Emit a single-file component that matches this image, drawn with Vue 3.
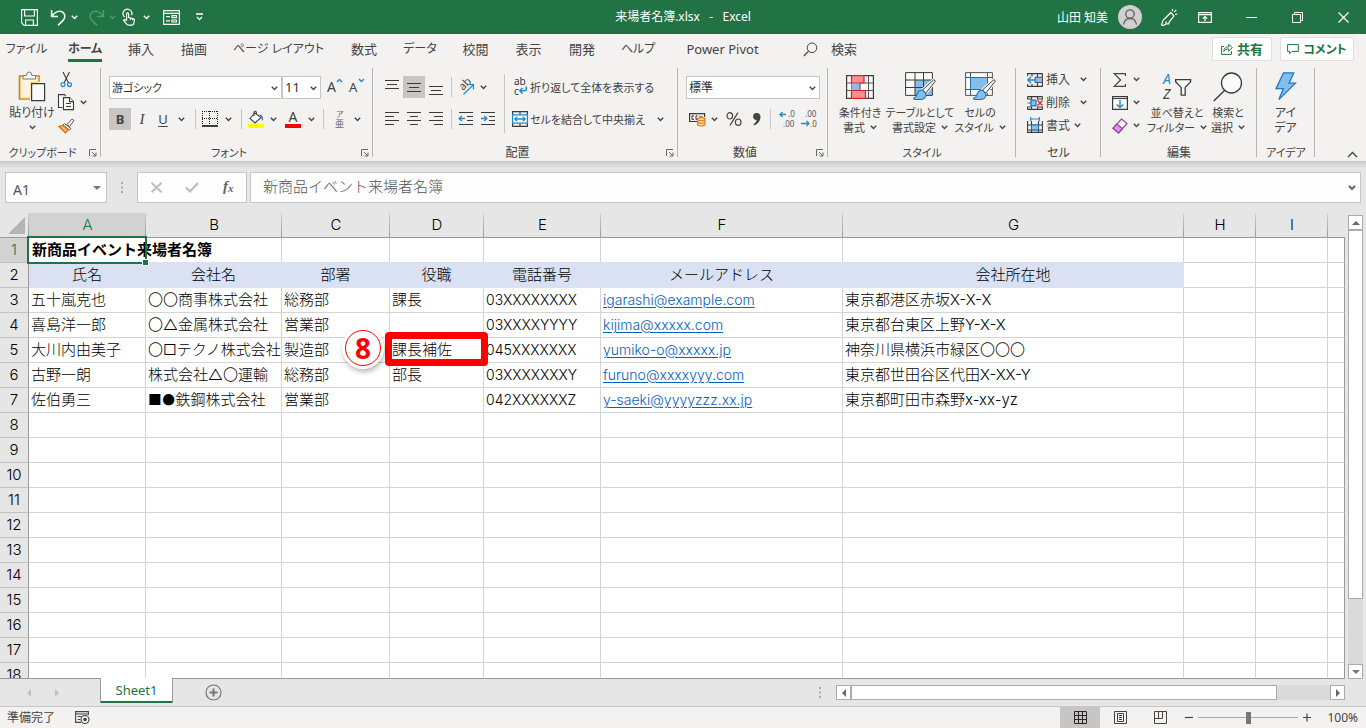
<script setup>
import { h, ref } from 'vue'

const K = '#3b3a39'
const B = '#1e8bcd'

const icons = {
  save: [17, 17, `<g fill="none" stroke="#fff" stroke-width="1.2"><path d="M.6.6h15.800v15.800H3.200L.6 13.800z"/><path d="M3.600.6v6.400h9.800V.6M4.600 16.400v-5.400h7.800v5.400"/></g>`],
  undo: [17, 17, `<path d="M1.600 1v6.400H8M2 7C5 2.600 9.600 1 12.600 3.200c3.400 2.600 2.600 6 .2 8.400L8 16.400" fill="none" stroke="#fff" stroke-width="1.500"/>`],
  redo: [17, 17, `<path d="M15.400 1v6.400H9M15 7C12 2.600 7.400 1 4.400 3.200 1 5.800 1.800 9.200 4.200 11.600L9 16.400" fill="none" stroke="#4f9a70" stroke-width="1.500"/>`],
  touch: [14, 17, `<g fill="none" stroke="#fff" stroke-width="1.200"><path d="M2.600 8A4.400 4.400 0 1 1 9.600 6.200"/><path d="M4.600 11.600V4.500q1-1.400 2 0V8.500l4.600 1q1.300.4 1.200 1.800l-.6 3.200q-.4 1.700-2 1.700H6.600q-1.200 0-2-1.200L1.600 11.400q.8-1.600 3 .2M8.600 9v2M10.600 9.400v1.800"/></g>`],
  form: [17, 15, `<g fill="none" stroke="#fff" stroke-width="1.200"><path d="M.6.6h15.800v13.800H.6zM.6 3.400h15.800M3 6.600h4M3 10.900h4M9 5.600h4.400v2H9zM9 10h4.400v2H9z"/></g>`],
  custom: [9, 8, `<path d="M1 1h7M2 4l2.500 2.600L7 4" fill="none" stroke="#fff" stroke-width="1.300"/>`],
  avatar: [24, 24, `<circle cx="12" cy="12" r="12" fill="#d2d0ce"/><g fill="none" stroke="#605e5c" stroke-width="1.300"><circle cx="12" cy="9" r="4.200"/><path d="M5.500 19.500q1-6 6.500-6t6.500 6"/></g>`],
  pen: [18, 18, `<g fill="none" stroke="#fff" stroke-width="1.200"><path d="M11 4.500 3.200 12l-1.700 4.800 1.700.7 3.300-1.700h2.200l.6-2L14 8z"/><path d="M5.500 15.500l1-2M12.500 3.200V1M14.200 4.200l2-2.400M15 6.500l2.200-.3"/></g>`],
  ribbon: [14, 11, `<path d="M.6.6h12.800v9.800H.6zM.6 2.600h12.800M7 9V4.600M4.800 6.600 7 4.500l2.200 2.100" fill="none" stroke="#fff" stroke-width="1.200"/>`],
  min: [11, 11, `<path d="M0 5.500h11" stroke="#fff"/>`],
  restore: [11, 11, `<path d="M.5 2.500h8v8h-8zM2.500 2.500v-2h8v8h-2" fill="none" stroke="#fff"/>`],
  close: [11, 11, `<path d="M.5.5l10 10M10.500.5l-10 10" stroke="#fff" stroke-width="1.200"/>`],
  search: [15, 15, `<circle cx="9" cy="5.800" r="4.800" fill="none" stroke="#444"/><path d="M5.600 9.200.8 14" stroke="#444" stroke-width="1.200"/>`],
  share: [12, 12, `<path d="M3 3.500H.6v7.900h9.800V8M2.800 8.500c0-3 1.700-4.700 4.900-4.700V1.200l3.600 3.600-3.600 3.400V5.900c-2.200 0-3.700.7-4.900 2.600z" fill="none" stroke="#217346"/>`],
  comment: [12, 11, `<path d="M.6.6h10.800v6.800H5L2.600 9.800V7.400h-2z" fill="none" stroke="#217346"/>`],
  paste: [28, 31, `<path d="M6 5H1.500v23H12M17 5h4v6" fill="none" stroke="#e07b10" stroke-width="1.600"/><path d="M2.500 6h17.500v5.500h-7V27h-10.500z" fill="#fdf3df" stroke="#f8c97a"/><path d="M5 8V4.500h3.500q0-3.500 2.700-3.500t2.700 3.500h3.600V8z" fill="#fafafa" stroke="#777"/><path d="M13.600 12.600h13v17h-13z" fill="#fafafa" stroke="${K}" stroke-width="1.200"/>`],
  cut: [17, 17, `<path d="M5 1 10.500 12M11.500 1 6 12" stroke="${K}" stroke-width="1.100"/><circle cx="5" cy="13.600" r="2" fill="none" stroke="${B}" stroke-width="1.200"/><circle cx="11.500" cy="13.600" r="2" fill="none" stroke="${B}" stroke-width="1.200"/>`],
  copy: [17, 17, `<g fill="#fafafa" stroke="${K}" stroke-width="1.100"><path d="M4.500 13.500h-4V.6h6l1.500 1.500"/><path d="M5.500 3.600h6l4 4v8h-10z"/><path d="M11.500 3.600v4h4M8 9.500h5M8 12.500h5"/></g>`],
  brush: [17, 16, `<path d="M9 6.500 14 1l2 1.500-4.500 6z" fill="#fafafa" stroke="#555"/><path d="M6.500 5.500l6.500 5-1.500 1.500-6.500-5z" fill="#fff" stroke="#555"/><path d="M5 7.500l5.500 4.200L7.500 15 .8 8.500z" fill="#f5b56a" stroke="#d86f0c" stroke-width="1.200"/>`],
  grow: [16, 20, `<text x="0" y="15" font-size="14" fill="#444">A</text><path d="M10 5l2.500-2.500L15 5" fill="none" stroke="${B}" stroke-width="1.400"/>`],
  shrink: [16, 20, `<text x="0" y="15" font-size="13" fill="#444">A</text><path d="M10 2l2.500 2.500L15 2" fill="none" stroke="${B}" stroke-width="1.400"/>`],
  border: [16, 16, `<path d="M.5 0v13M15.500 0v13M7.500 0v13M0 .5h16M0 7.500h16" stroke="#222" stroke-dasharray="1 1"/><path d="M0 15h16" stroke="#111" stroke-width="1.600"/>`],
  fill: [17, 18, `<path d="M7 3 2 8.500l5 4.500 6-5.500zM6 6V2q1.200-1.600 2.400 0v3" fill="#fff" stroke="#444" stroke-width="1.100"/><path d="M12 4.500q3.500 1 3 6-1.500 0-1.500-2.500 0-1.500-2-2z" fill="#2b78b8"/><path d="M0 14h16v4H0z" fill="#ff0"/>`],
  color: [17, 18, `<text x="3.500" y="12" font-size="14" fill="#444">A</text><path d="M0 14h16v4H0z" fill="#f00"/>`],
  ruby: [12, 20, `<text x="2" y="8" font-size="8" fill="#666">ア</text><text x="1" y="18" font-size="9" fill="#666">亜</text>`],
  top: [14, 11, `<path d="M0 1.500h14M2 5.500h10M0 9.500h14" stroke="${K}"/>`],
  lefta: [14, 14, `<path d="M0 .5h14M0 4.500h9M0 8.500h14M0 12.500h9" stroke="${K}"/>`],
  mida: [14, 14, `<path d="M0 .5h14M3 4.500h8M0 8.500h14M3 12.500h8" stroke="${K}"/>`],
  righta: [14, 14, `<path d="M0 .5h14M5 4.500h9M0 8.500h14M5 12.500h9" stroke="${K}"/>`],
  orient: [17, 17, `<text x="0" y="0" font-size="11" fill="#444" transform="translate(5 12) rotate(-45)">ab</text><path d="M5.500 15.500 15.500 5.500M10.500 5.500h5v5" fill="none" stroke="${B}" stroke-width="1.200"/>`],
  outdent: [15, 14, `<path d="M0 .5h14M8 4.500h6M8 8.500h6M0 12.500h14" stroke="${K}"/><path d="M0 6.500h6M2.800 4 .2 6.500 2.800 9" fill="none" stroke="${B}" stroke-width="1.400"/>`],
  indent: [15, 14, `<path d="M0 .5h14M8 4.500h6M8 8.500h6M0 12.500h14" stroke="${K}"/><path d="M0 6.500h6M3.200 4 5.800 6.500 3.200 9" fill="none" stroke="${B}" stroke-width="1.400"/>`],
  wrap: [16, 20, `<text x="2" y="8" font-size="10" fill="#333">ab</text><text x="2" y="18" font-size="10" fill="#333">c</text><path d="M14 9.500q1.600 4-2 4.300H8M10.500 11 7.800 13.800l2.700 2.700" fill="none" stroke="${B}" stroke-width="1.500"/>`],
  merge: [16, 16, `<path d="M.6.6h14.800v14.800H.6zM8 .6v3M8 12v3.400" fill="none" stroke="${K}" stroke-width="1.200"/><path d="M.6 3.800h14.800v8.400H.6z" fill="#fff" stroke="${B}" stroke-width="1.300"/><path d="M3 8h10M5.200 5.600 2.800 8l2.400 2.400M10.800 5.600 13.200 8l-2.400 2.400" fill="none" stroke="${B}" stroke-width="1.300"/>`],
  money: [17, 15, `<path d="M8 9.500H.6V1.600h15V5" fill="none" stroke="${K}" stroke-width="1.200"/><path d="M5 3.800H3v3.600h2M8.500 3.800H7v3.600h1M11 3.800V5.500M13 3.800V5" fill="none" stroke="${K}"/><path d="M8.600 6.500v6.500q3.700 1.800 7.300 0V6.500q-3.600-1.800-7.300 0z" fill="#fbd9b0" stroke="#e07b10" stroke-width="1.200"/><path d="M8.600 8q3.700 1.500 7.300 0M8.600 10.500q3.700 1.500 7.300 0" fill="none" stroke="#e07b10" stroke-width="1.200"/>`],
  percent: [16, 14, `<g fill="none" stroke="#444" stroke-width="1.200"><ellipse cx="3.800" cy="3.800" rx="2.800" ry="3.200"/><ellipse cx="12.200" cy="10.200" rx="2.800" ry="3.200"/><path d="M12 .6 4 13.400"/></g>`],
  comma: [9, 13, `<path d="M4.500 0a3.600 3.600 0 0 1 4 3.800c0 4-2.800 7.400-6.200 8.600l-.7-1.100q2.900-1.800 3.100-4.300A3.500 3.500 0 0 1 4.500 0z" fill="#444"/>`],
  incdec: [17, 20, `<text x="9" y="8" font-size="8" fill="#555">.0</text><text x="4" y="18" font-size="8" fill="#555">.00</text><path d="M1 5.500h6M3.500 3 1 5.500 3.500 8" fill="none" stroke="${B}" stroke-width="1.300"/>`],
  decdec: [17, 20, `<text x="4" y="8" font-size="8" fill="#555">.00</text><text x="9" y="18" font-size="8" fill="#555">.0</text><path d="M0 14.500h8M5.500 12 8 14.500 5.500 17" fill="none" stroke="${B}" stroke-width="1.300"/>`],
  cond: [28, 24, `<path d="M.6.6h26.800v22.800H.6z" fill="#fafafa" stroke="${K}" stroke-width="1.200"/><path d="M5.500.6v22.800M22.500.6v22.800M.6 8h26.800M.6 15.500h26.800" stroke="#555"/><path d="M5.500.6H18V8H5.500zM5.500 15.500h14v7.900h-14z" fill="#ff8f90" stroke="#e02020" stroke-width="1.200"/><path d="M5.500 8.500H14V15H5.500z" fill="#83beec"/><path d="M14 8v7.500" stroke="#555"/>`],
  tablefmt: [31, 29, `<path d="M.6.600h26.800v22.800H.6z" fill="#fafafa"/><path d="M10 8h17v15H10z" fill="#83beec"/><path d="M.6.6h26.800v22.800H.6zM10 .6v22.800M18.500.6v22.800M.6 8h26.800M.6 15.500h26.800" fill="none" stroke="${K}"/><path d="M28.500 8 17.500 18l3 3.500L30 9.500z" stroke="#f3f2f1" stroke-width="3"/><path d="M28.500 8 17.500 18l3 3.500L30 9.500q.5-2-1.500-1.500z" fill="#f6f6f6" stroke="#444"/><path d="M17.500 18l3.500 3.800q.5 5.700-6.500 5.700H9.500q-1.500-.5-.5-1.500 2.500-.7 3-3.500 1.500-4.500 5.500-4.500z" fill="#83beec" stroke="#1e6fb8" stroke-width="1.100"/>`],
  cellstyle: [31, 29, `<path d="M.6.6h26.800v22.800H.6z" fill="#fafafa"/><path d="M.6.600h26.800v22.800H.6zM5.500.6v22.800M22.500.6v22.800M.6 5.500h26.800M.6 17.500h26.800" fill="none" stroke="#555"/><path d="M5.500 5.500h17v12h-17z" fill="#83beec" stroke="#1e6fb8"/><path d="M28.500 8 17.500 18l3 3.500L30 9.500z" stroke="#f3f2f1" stroke-width="3"/><path d="M28.500 8 17.500 18l3 3.500L30 9.500q.5-2-1.500-1.500z" fill="#f6f6f6" stroke="#444"/><path d="M17.500 18l3.500 3.800q.5 5.700-6.500 5.700H9.500q-1.500-.5-.5-1.500 2.500-.7 3-3.500 1.500-4.500 5.500-4.500z" fill="#83beec" stroke="#1e6fb8" stroke-width="1.100"/>`],
  cins: [16, 14, `<path d="M.6 3V.6h14.800v12.800H.6V11M5 .6v3M10.500.6v12.800M5 11v2.400" fill="none" stroke="${K}" stroke-width="1.100"/><path d="M8 4.200h7.500v5.300H8z" fill="#83beec" stroke="${K}" stroke-width=".8"/><path d="M1 7h7M4 3.800.9 7 4 10.200" fill="none" stroke="${B}" stroke-width="1.500"/>`],
  cdel: [16, 14, `<path d="M.6.6h14.800M.6.6V3h4V.6M10.500.6V3h4.900V.6M.6 13.400h14.800M.6 13.400V11h4v2.400M10.500 13.400V11h4.900v2.400" fill="none" stroke="${K}" stroke-width="1.100"/><path d="M.6 7h3M4 4.200h5v5.600H4z" fill="#83beec" stroke="#1e6fb8" stroke-width="1.200"/><path d="M10.500 4.500l5 5M15.500 4.500l-5 5" stroke="#e0343a" stroke-width="1.600"/>`],
  cfmt: [16, 17, `<path d="M3.600 0v4M12.400 0v4M3.600 2h8.800" stroke="${B}" stroke-width="1.200"/><path d="M.6 4v11.400h14.800V4M.6 8h14.800M.6 13h14.800M4.500 4v11.400M11.500 4v11.400" fill="none" stroke="${K}" stroke-width="1.100"/><path d="M4.500 8h7v5h-7z" fill="#83beec" stroke="#1e6fb8"/>`],
  sigma: [16, 16, `<path d="M13.400 4V1.600H2.200L8.600 8 2.200 14.400h11.200V12" fill="none" stroke="#444" stroke-width="1.200"/>`],
  down: [16, 14, `<path d="M.6.600h14.800v12.800H.6z" fill="#fafafa" stroke="${K}" stroke-width="1.200"/><path d="M.6 2.600h14.800" stroke="${K}"/><path d="M8 4v7.500M4.800 8.400 8 11.600l3.200-3.200" fill="none" stroke="${B}" stroke-width="1.400"/>`],
  eraser: [16, 16, `<path d="M9.500 1 15 5.500 6.500 15 1 10.200z" fill="#fafafa" stroke="#9b3fa8" stroke-width="1.200"/><path d="M4.800 6l5.700 4.700L6.500 15 1 10.200z" fill="#d49adb" stroke="#9b3fa8" stroke-width="1.200"/>`],
  sort: [30, 31, `<text x="1" y="13" font-size="14" fill="${B}">A</text><text x="1" y="28" font-size="14" fill="#444">Z</text><path d="M13.600 8.600h15v2.200l-5.400 5.600v7.800h-4v-7.800l-5.600-5.600z" fill="#fafafa" stroke="${K}" stroke-width="1.300"/>`],
  find: [30, 30, `<circle cx="18.500" cy="11" r="10" fill="#fafafa" stroke="${K}" stroke-width="1.300"/><path d="M11.500 18.500.8 29" stroke="${K}" stroke-width="1.400"/>`],
  idea: [23, 29, `<path d="M9.500.8h10.200l-4.600 10.400h6.300L4.800 27.600l4.600-11H2z" fill="#83beec" stroke="#1e78c8" stroke-width="1.300"/>`],
  launch: [8, 8, `<path d="M7 .5H.5V7M3 3l4 4M7 3.500V7H3.500" fill="none" stroke="#666"/>`],
  collapse: [11, 7, `<path d="M1 6l4.500-4.500L10 6" fill="none" stroke="#444" stroke-width="1.400"/>`],
  cancel: [13, 11, `<path d="M1.500.8l10 9.400M11.500.8l-10 9.400" stroke="#bdbdbd" stroke-width="1.900"/>`],
  enter: [14, 11, `<path d="M1 5.500 5 9.500 13 1" fill="none" stroke="#bdbdbd" stroke-width="2.200"/>`],
  fx: [16, 19, `<text x="3" y="13" font-size="15" font-style="italic" font-weight="700" font-family="Liberation Serif, serif" fill="#666">f</text><text x="8" y="14" font-size="11" font-style="italic" font-weight="700" font-family="Liberation Serif, serif" fill="#666">x</text>`],
  dots: [2, 11, `<path d="M0 0h2v2H0zM0 4.500h2v2H0zM0 9h2v2H0z" fill="#aaa"/>`],
  tri: [8, 4, `<path d="M0 0h8L4 4z" fill="#777"/>`],
  chev2: [8, 6, `<path d="M1 1l3 3 3-3" fill="none" stroke="#666" stroke-width="2"/>`],
  corner: [17, 17, `<path d="M17 0v17H0z" fill="#b4b4b4"/>`],
  up: [8, 4, `<path d="M4 0l4 4H0z" fill="#666"/>`],
  left: [4, 8, `<path d="M4 0v8L0 4z" fill="#666"/>`],
  right: [4, 8, `<path d="M0 0v8l4-4z" fill="#666"/>`],
  prev: [4, 8, `<path d="M4 0v8L0 4z" fill="#c0c0c0"/>`],
  next: [4, 8, `<path d="M0 0v8l4-4z" fill="#c0c0c0"/>`],
  plus: [17, 17, `<circle cx="8.500" cy="8.500" r="7.500" fill="none" stroke="#777" stroke-width="1.200"/><path d="M8.500 4.500v8M4.500 8.500h8" stroke="#777" stroke-width="2"/>`],
  macro: [15, 13, `<path d="M13.400 4V.6H.6v10.800H6M.6 3h12.800M2.600 5.500h4M2.600 8.500h2.500" fill="none" stroke="#444" stroke-width="1.100"/><circle cx="10" cy="8.500" r="4" fill="#f3f2f1" stroke="#444" stroke-width="1.100"/><circle cx="10" cy="8.500" r="1.800" fill="#444"/>`],
  vgrid: [13, 13, `<path d="M.5.5h12v12H.5zM4.500.5v12M8.500.5v12M.5 4.500h12M.5 8.500h12" fill="none" stroke="#262626"/>`],
  vpage: [13, 13, `<path d="M.5.500h12v12H.5zM3.500 2.500h6v8h-6zM5 4.500h3M5 6.500h3M5 8.500h3" fill="none" stroke="#444"/>`],
  vbreak: [13, 13, `<path d="M.5.5h12v12H.5zM4.500.5v7M8.500.5v7M.5 7.500h8" fill="none" stroke="#444"/>`],
  zoomout: [8, 9, `<path d="M0 4.500h8" stroke="#444" stroke-width="1.200"/>`],
  zoomin: [8, 9, `<path d="M0 4.500h8M4 .5v8" stroke="#444" stroke-width="1.200"/>`]
}

const Ic = (p) => {
  const [w, ht, s] = icons[p.n]
  return h('svg', { width: w, height: ht, viewBox: `0 0 ${w} ${ht}`, 'aria-hidden': 'true', innerHTML: s })
}
Ic.props = ['n']

const Chev = () =>
  h('svg', { width: 7, height: 5, viewBox: '0 0 7 5', 'aria-hidden': 'true' }, [
    h('path', { d: 'M.8.8l2.700 2.700L6.200.8', fill: 'none', stroke: 'currentColor', 'stroke-width': 1.4 })
  ])

const tabs = ['ファイル', 'ホーム', '挿入', '描画', 'ページ レイアウト', '数式', 'データ', '校閲', '表示', '開発', 'ヘルプ', 'Power Pivot']
const isKana = (t) => /[ァ-ン]/.test(t)
const active = ref('ホーム')
const cols = ['A', 'B', 'C', 'D', 'E', 'F', 'G', 'H', 'I', '']
const heads = ['氏名', '会社名', '部署', '役職', '電話番号', 'メールアドレス', '会社所在地', '', '', '']
const data = [
  ['五十嵐克也', '〇〇商事株式会社', '総務部', '課長', '03XXXXXXXX', 'igarashi@example.com', '東京都港区赤坂X-X-X', '', '', ''],
  ['喜島洋一郎', '〇△金属株式会社', '営業部', '', '03XXXXYYYY', 'kijima@xxxxx.com', '東京都台東区上野Y-X-X', '', '', ''],
  ['大川内由美子', '〇□テクノ株式会社', '製造部', '課長補佐', '045XXXXXXX', 'yumiko-o@xxxxx.jp', '神奈川県横浜市緑区〇〇〇', '', '', ''],
  ['古野一朗', '株式会社△〇運輸', '総務部', '部長', '03XXXXXXXY', 'furuno@xxxxyyy.com', '東京都世田谷区代田X-XX-Y', '', '', ''],
  ['佐伯勇三', '■●鉄鋼株式会社', '営業部', '', '042XXXXXXZ', 'y-saeki@yyyyzzz.xx.jp', '東京都町田市森野x-xx-yz', '', '', '']
]
const emptyRows = Array.from({ length: 11 }, (_, i) => i + 8)
const zoom = ref(50)
</script>

<template>
  <div class="app">
    <header class="titlebar">
      <div class="quick">
        <button class="q-save" aria-label="上書き保存"><Ic n="save" /></button>
        <button class="q-undo" aria-label="元に戻す"><Ic n="undo" /></button>
        <button class="q-drop" aria-label="元に戻す履歴"><Chev /></button>
        <button class="q-redo" aria-label="やり直し"><Ic n="redo" /></button>
        <button class="q-drop dim" aria-label="やり直し履歴"><Chev /></button>
        <button class="q-touch" aria-label="タッチ"><Ic n="touch" /></button>
        <button class="q-drop" aria-label="タッチ メニュー"><Chev /></button>
        <button class="q-form" aria-label="フォーム"><Ic n="form" /></button>
        <button class="q-custom" aria-label="カスタマイズ"><Ic n="custom" /></button>
      </div>
      <div class="doc">来場者名簿.xlsx&nbsp;&nbsp;&nbsp;-&nbsp;&nbsp;&nbsp;Excel</div>
      <div class="window">
        <span>山田 知美</span>
        <button class="w-avatar" aria-label="アカウント"><Ic n="avatar" /></button>
        <button class="w-pen" aria-label="新機能"><Ic n="pen" /></button>
        <button class="w-ribbon" aria-label="リボンの表示"><Ic n="ribbon" /></button>
        <button class="w-ctl" aria-label="最小化"><Ic n="min" /></button>
        <button class="w-ctl" aria-label="元に戻す(縮小)"><Ic n="restore" /></button>
        <button class="w-ctl" aria-label="閉じる"><Ic n="close" /></button>
      </div>
    </header>

    <div class="tabrow">
      <nav class="tabs">
        <button v-for="t in tabs" :key="t" :class="{ on: t === active, kana: isKana(t) }" @click="active = t"><span>{{ t }}</span></button>
      </nav>
      <button class="find"><Ic n="search" />検索</button>
      <div class="actions">
        <button><Ic n="share" />共有</button>
        <button class="kana"><Ic n="comment" />コメント</button>
      </div>
    </div>

    <div class="ribbon">
      <section class="group g-clip">
        <div class="body clip">
          <button class="big"><i><Ic n="paste" /></i><span>貼り付け</span><span><Chev /></span></button>
          <div class="stack">
            <button aria-label="切り取り"><Ic n="cut" /></button>
            <button aria-label="コピー"><Ic n="copy" /><Chev /></button>
            <button aria-label="書式のコピー"><Ic n="brush" /></button>
          </div>
        </div>
        <footer>クリップボード<button aria-label="クリップボードの詳細"><Ic n="launch" /></button></footer>
      </section>

      <section class="group g-font">
        <div class="body rows">
          <div class="row">
            <label class="combo c-name"><select aria-label="フォント名"><option>游ゴシック</option></select><Chev /></label>
            <label class="combo c-size"><select aria-label="フォント サイズ"><option>11</option></select><Chev /></label>
            <button class="w28" aria-label="拡大"><Ic n="grow" /></button>
            <button class="w16" aria-label="縮小"><Ic n="shrink" /></button>
          </div>
          <div class="row">
            <button class="w22 on b">B</button>
            <button class="w22 i">I</button>
            <button class="w20 u">U</button>
            <button class="w16" aria-label="下線の種類"><Chev /></button>
            <span class="sep w12"></span>
            <button class="w18" aria-label="罫線"><Ic n="border" /></button>
            <button class="w18" aria-label="罫線の種類"><Chev /></button>
            <span class="sep w8"></span>
            <button class="w22" aria-label="塗りつぶし"><Ic n="fill" /></button>
            <button class="w12" aria-label="塗りつぶしの色"><Chev /></button>
            <button class="w28" aria-label="文字の色"><Ic n="color" /></button>
            <button class="w8" aria-label="文字の色の選択"><Chev /></button>
            <span class="sep w16"></span>
            <button class="w18" aria-label="ふりがな"><Ic n="ruby" /></button>
            <button class="w16" aria-label="ふりがなの設定"><Chev /></button>
          </div>
        </div>
        <footer>フォント<button aria-label="フォントの詳細"><Ic n="launch" /></button></footer>
      </section>

      <section class="group g-align">
        <div class="body align">
          <div class="rows">
            <div class="row">
              <button class="w22 hi" aria-label="上揃え"><Ic n="top" /></button>
              <button class="w22 on" aria-label="上下中央揃え"><Ic n="top" /></button>
              <button class="w22 lo" aria-label="下揃え"><Ic n="top" /></button>
              <span class="sep w8"></span>
              <button class="w22" aria-label="方向"><Ic n="orient" /></button>
              <button class="w12" aria-label="方向の種類"><Chev /></button>
            </div>
            <div class="row">
              <button class="w22" aria-label="左揃え"><Ic n="lefta" /></button>
              <button class="w22" aria-label="中央揃え"><Ic n="mida" /></button>
              <button class="w22" aria-label="右揃え"><Ic n="righta" /></button>
              <span class="sep w8"></span>
              <button class="w22" aria-label="インデントを減らす"><Ic n="outdent" /></button>
              <button class="w22" aria-label="インデントを増やす"><Ic n="indent" /></button>
            </div>
          </div>
          <div class="rows wraps">
            <button class="text"><Ic n="wrap" />折り返して全体を表示する</button>
            <button class="text"><Ic n="merge" />セルを結合して中央揃え<Chev class="end" /></button>
          </div>
        </div>
        <footer>配置<button aria-label="配置の詳細"><Ic n="launch" /></button></footer>
      </section>

      <section class="group g-num">
        <div class="body rows">
          <div class="row">
            <label class="combo c-num"><select aria-label="表示形式"><option>標準</option></select><Chev /></label>
          </div>
          <div class="row">
            <button class="w22" aria-label="通貨"><Ic n="money" /></button>
            <button class="w12" aria-label="通貨の種類"><Chev /></button>
            <button class="w28" aria-label="パーセント"><Ic n="percent" /></button>
            <button class="w16" aria-label="桁区切り"><Ic n="comma" /></button>
            <span class="sep w12"></span>
            <button class="w22" aria-label="小数点以下を増やす"><Ic n="incdec" /></button>
            <button class="w22" aria-label="小数点以下を減らす"><Ic n="decdec" /></button>
          </div>
        </div>
        <footer>数値<button aria-label="数値の詳細"><Ic n="launch" /></button></footer>
      </section>

      <section class="group g-style">
        <div class="body">
          <button class="big"><i><Ic n="cond" /></i><span>条件付き</span><span>書式 <Chev /></span></button>
          <button class="big wide"><i><Ic n="tablefmt" /></i><span>テーブルとして</span><span>書式設定 <Chev /></span></button>
          <button class="big"><i><Ic n="cellstyle" /></i><span>セルの</span><span>スタイル <Chev /></span></button>
        </div>
        <footer>スタイル</footer>
      </section>

      <section class="group g-cell">
        <div class="body stack cells">
          <button><Ic n="cins" /><span>挿入</span><Chev /></button>
          <button><Ic n="cdel" /><span>削除</span><Chev /></button>
          <button><Ic n="cfmt" /><span class="near">書式</span><Chev /></button>
        </div>
        <footer>セル</footer>
      </section>

      <section class="group g-edit">
        <div class="body">
          <div class="stack edit">
            <button aria-label="合計"><Ic n="sigma" /><Chev /></button>
            <button aria-label="フィル"><Ic n="down" /><Chev /></button>
            <button aria-label="クリア"><Ic n="eraser" /><Chev /></button>
          </div>
          <button class="big"><i><Ic n="sort" /></i><span>並べ替えと</span><span>フィルター <Chev /></span></button>
          <button class="big"><i><Ic n="find" /></i><span>検索と</span><span>選択 <Chev /></span></button>
        </div>
        <footer>編集</footer>
      </section>

      <section class="group g-idea">
        <div class="body">
          <button class="big"><i><Ic n="idea" /></i><span>アイ</span><span>デア</span></button>
        </div>
        <footer>アイデア</footer>
      </section>
      <button class="collapse" aria-label="リボンを折りたたむ"><Ic n="collapse" /></button>
    </div>

    <div class="formula">
      <div class="namebox"><input aria-label="名前ボックス" value="A1" /><button aria-label="名前の一覧"><Ic n="tri" /></button></div>
      <span class="grip"><Ic n="dots" /></span>
      <div class="fbtns">
        <button aria-label="キャンセル"><Ic n="cancel" /></button>
        <button aria-label="入力"><Ic n="enter" /></button>
        <button aria-label="関数の挿入"><Ic n="fx" /></button>
      </div>
      <div class="fbar"><input aria-label="数式バー" value="新商品イベント来場者名簿" /><button aria-label="数式バーの展開"><Ic n="chev2" /></button></div>
    </div>

    <main class="sheet">
      <div class="viewport">
        <table>
          <colgroup>
            <col class="k0" /><col class="kA" /><col class="kB" /><col class="kC" /><col class="kD" /><col class="kE" /><col class="kF" /><col class="kG" /><col class="kH" /><col class="kH" /><col />
          </colgroup>
          <thead>
            <tr>
              <th class="all"><Ic n="corner" /></th>
              <th v-for="(c, i) in cols" :key="i" :class="{ sel: i === 0 }">{{ c }}</th>
            </tr>
          </thead>
          <tbody>
            <tr class="title">
              <th class="sel">1</th>
              <td class="cur">新商品イベント来場者名簿</td>
              <td v-for="n in 9" :key="n"></td>
            </tr>
            <tr class="heads">
              <th>2</th>
              <td v-for="(c, i) in heads" :key="i">{{ c }}</td>
            </tr>
            <tr v-for="(r, ri) in data" :key="ri">
              <th>{{ ri + 3 }}</th>
              <td v-for="(c, i) in r" :key="i" :class="{ lat: i === 4 || i === 5, mark: ri === 2 && i === 3 }">
                <a v-if="i === 5" :href="'mailto:' + c">{{ c }}</a>
                <template v-else>{{ c }}</template>
                <span v-if="ri === 2 && i === 3" class="frame"></span>
                <span v-if="ri === 2 && i === 3" class="badge"><b>8</b></span>
              </td>
            </tr>
            <tr v-for="n in emptyRows" :key="n">
              <th>{{ n }}</th>
              <td v-for="c in 10" :key="c"></td>
            </tr>
          </tbody>
        </table>
      </div>
      <div class="vscroll">
        <button aria-label="上へ"><Ic n="up" /></button>
        <div class="track"><div class="thumb"></div></div>
        <button aria-label="下へ"><Ic n="tri" /></button>
      </div>
    </main>

    <div class="sheetbar">
      <button class="nav" aria-label="前のシート"><Ic n="prev" /></button>
      <button class="nav" aria-label="次のシート"><Ic n="next" /></button>
      <button class="stab">Sheet1</button>
      <button class="add" aria-label="新しいシート"><Ic n="plus" /></button>
      <span class="hgrip"><Ic n="dots" /></span>
      <div class="hscroll">
        <button aria-label="左へ"><Ic n="left" /></button>
        <div class="track"><div class="thumb"></div></div>
        <button aria-label="右へ"><Ic n="right" /></button>
      </div>
    </div>

    <footer class="status">
      <span>準備完了</span>
      <button class="macro" aria-label="マクロの記録"><Ic n="macro" /></button>
      <div class="views">
        <button class="on" aria-label="標準"><Ic n="vgrid" /></button>
        <button aria-label="ページ レイアウト"><Ic n="vpage" /></button>
        <button aria-label="改ページ プレビュー"><Ic n="vbreak" /></button>
      </div>
      <button class="z" aria-label="縮小"><Ic n="zoomout" /></button>
      <input v-model="zoom" type="range" min="0" max="100" aria-label="ズーム" />
      <button class="z" aria-label="拡大"><Ic n="zoomin" /></button>
      <button class="pct">100%</button>
    </footer>
  </div>
</template>

<style>
body {
  margin: 0;
  overflow: hidden;
}
</style>

<style scoped>
.app {
  display: flex;
  flex-direction: column;
  height: 100vh;
  background: #e6e6e6;
  color: #444;
  font: 12px/15px "Noto Sans", "Noto Sans CJK JP", sans-serif;
  font-feature-settings: "palt";
  white-space: nowrap;
}
.app * {
  box-sizing: border-box;
}
svg {
  display: block;
  flex: none;
  overflow: visible;
}
button {
  display: flex;
  align-items: center;
  justify-content: center;
  padding: 0;
  border: 0;
  background: none;
  color: inherit;
  font: inherit;
  font-feature-settings: inherit;
  white-space: nowrap;
}
input,
select {
  font: inherit;
  font-feature-settings: inherit;
  color: inherit;
}

.titlebar {
  display: grid;
  grid-template-columns: 1fr auto 1fr;
  align-items: center;
  flex: none;
  height: 34px;
  background: #217346;
  color: #fff;
}
.doc {
  padding-bottom: 2px;
}
.quick,
.window {
  display: flex;
  align-items: center;
}
.quick {
  padding-left: 16px;
}
.window {
  justify-content: flex-end;
}
.q-save { width: 26px; }
.q-undo { width: 28px; padding-left: 4px; }
.q-drop { width: 8px; margin-right: 8px; }
.q-drop.dim { color: #4f9a70; margin-right: 0; }
.q-redo { width: 20px; margin-right: 2px; }
.q-touch { width: 26px; }
.q-form { width: 26px; }
.q-custom { width: 30px; }
.w-avatar { width: 44px; }
.w-pen { width: 34px; }
.w-ribbon { width: 38px; margin-right: 4px; }
.w-ctl { width: 46px; height: 32px; }

.tabrow {
  display: flex;
  flex: none;
  height: 34px;
  background: #f3f2f1;
}
.tabs {
  display: grid;
  grid-template-columns: 53px 64px 48px 58px 111px 60px 52px 59px 47px 60px 52px 117px;
  padding-bottom: 2px;
  font-size: 13px;
}
.tabs span {
  height: 24px;
  line-height: 22px;
  border-bottom: 3px solid transparent;
}
.tabs .kana,
.actions .kana {
  font-size: 12px;
}
.tabs .on span {
  border-color: #217346;
  font-weight: 700;
}
.find {
  gap: 13px;
  margin: 0 0 4px 22px;
  font-size: 13px;
}
.actions {
  display: flex;
  gap: 8px;
  margin-left: auto;
  padding: 3px 12px 7px 0;
}
.actions button {
  gap: 4px;
  width: 60px;
  border: 1px solid #e1dfdd;
  border-radius: 2px;
  background: #fff;
  color: #217346;
  font-size: 13px;
  font-weight: 700;
}
.actions .kana {
  width: 74px;
}

.ribbon {
  display: flex;
  flex: none;
  height: 93px;
  background: #f3f2f1;
}
.group {
  display: flex;
  flex-direction: column;
  flex: none;
  background: linear-gradient(#b8b6b4, #b8b6b4) right top / 1px 89px no-repeat;
}
.g-clip { width: 101px; }
.g-font { width: 272px; }
.g-align { width: 305px; }
.g-num { width: 150px; }
.g-style { width: 188px; }
.g-cell { width: 85px; }
.g-edit { width: 156px; }
.g-idea { width: 58px; }
.group footer {
  display: flex;
  justify-content: center;
  position: relative;
  height: 15px;
  padding-right: 16px;
}
.g-clip footer,
.g-font footer,
.g-style footer,
.g-idea footer {
  font-size: 11px;
}
.g-style footer,
.g-cell footer,
.g-edit footer,
.g-idea footer {
  padding: 0;
}
.group footer button {
  position: absolute;
  right: 4px;
  top: 4px;
}
.body {
  display: flex;
  height: 77px;
}
.rows {
  display: flex;
  flex-direction: column;
  gap: 10px;
  padding: 8px 8px 0;
}
.row {
  display: flex;
  height: 22px;
}
.row > button,
.row > .sep {
  height: 22px;
}
.w8 { width: 8px; }
.w12 { width: 12px; }
.w16 { width: 16px; }
.w18 { width: 18px; }
.w20 { width: 20px; }
.w22 { width: 22px; }
.w28 { width: 28px; }
.on {
  background: #c8c6c4;
}
.tabs .on {
  background: none;
}
.sep {
  background: linear-gradient(#c8c6c4, #c8c6c4) center / 1px 20px no-repeat;
}
.b {
  font-size: 13px;
  font-weight: 700;
}
.i {
  font: italic 15px "Liberation Serif", serif;
}
.u {
  font-size: 13px;
  text-decoration: underline;
  text-underline-offset: 2px;
}
.hi {
  padding-bottom: 6px;
}
.lo {
  padding-top: 6px;
}
.combo {
  position: relative;
  height: 23px;
}
.combo select {
  width: 100%;
  height: 100%;
  padding: 0 0 0 2px;
  border: 1px solid #c8c6c4;
  border-radius: 0;
  appearance: none;
  background: #fff;
  color: #333;
}
.combo svg {
  position: absolute;
  right: 4px;
  top: 10px;
}
.c-name { width: 173px; font-size: 11px; }
.c-size { width: 39px; font-size: 13px; }
.c-num { width: 134px; }
.clip {
  padding-left: 7px;
}
.big {
  flex-direction: column;
  justify-content: flex-start;
  width: 50px;
}
.big i {
  display: flex;
  align-items: center;
  height: 37px;
}
.big span {
  display: flex;
  align-items: center;
  gap: 5px;
  height: 15px;
}
.stack {
  display: flex;
  flex-direction: column;
}
.stack button {
  justify-content: flex-start;
  gap: 5px;
  height: 23px;
}
.clip .stack {
  padding-left: 1px;
}
.align .rows {
  padding-right: 0;
}
.align .wraps {
  margin-left: 5px;
  background: linear-gradient(#c8c6c4, #c8c6c4) left 6px / 1px 59px no-repeat;
  font-size: 11px;
}
.text {
  justify-content: flex-start;
  gap: 2px;
  height: 22px;
}
.end {
  margin-left: 10px;
}
.g-style .body {
  padding-left: 6px;
}
.g-style .big {
  width: 52px;
}
.g-style .wide {
  width: 68px;
}
.g-style .big,
.g-edit .big {
  font-size: 11px;
}
.cells {
  padding-left: 11px;
}
.cells button {
  gap: 3px;
}
.cells span {
  width: 31px;
  text-align: left;
}
.cells .near {
  width: 25px;
}
.edit {
  width: 48px;
  padding-left: 11px;
}
.g-edit .big {
  width: 56px;
}
.g-edit .big + .big {
  width: 46px;
}
.g-idea .big {
  width: 57px;
}
.collapse {
  align-self: flex-end;
  margin: 0 8px 3px auto;
}

.formula {
  display: flex;
  flex: none;
  height: 52px;
  padding: 11px 5px 10px;
  background: linear-gradient(#c9c9c9, #e6e6e6) top / 100% 7px no-repeat #e6e6e6;
}
.namebox,
.fbtns,
.fbar {
  display: flex;
  border: 1px solid #c6c6c6;
  background: #fdfdfd;
}
.namebox {
  width: 102px;
}
.namebox input,
.fbar input {
  flex: 1;
  min-width: 0;
  padding: 0;
  border: 0;
  outline: 0;
  background: none;
  color: #555;
}
.namebox input {
  padding: 3px 0 0 7px;
  font-size: 14px;
}
.namebox button {
  width: 18px;
}
.fbar button {
  width: 16px;
}
.grip {
  display: flex;
  align-items: center;
  justify-content: center;
  width: 30px;
}
.fbtns {
  width: 110px;
  margin-right: 3px;
}
.fbtns button {
  flex: 1;
}
.fbar {
  flex: 1;
}
.fbar input {
  padding: 0 0 5px 12px;
  font: 300 15px "Inter", "Noto Sans CJK JP", sans-serif;
  font-feature-settings: normal;
}

.sheet {
  display: flex;
  flex: 1;
  gap: 3px;
  min-height: 0;
  padding-right: 3px;
}
.viewport {
  flex: 1;
  min-width: 0;
  overflow: hidden;
  border-bottom: 1px solid #999;
  font: 300 15px/24px "Inter", "Noto Sans CJK JP", sans-serif;
  font-feature-settings: normal;
  color: #000;
}
table {
  width: 100%;
  table-layout: fixed;
  border-collapse: separate;
  border-spacing: 0;
}
.k0 { width: 29px; }
.kA, .kE { width: 117px; }
.kB { width: 136px; }
.kC { width: 108px; }
.kD { width: 94px; }
.kF { width: 242px; }
.kG { width: 341px; }
.kH { width: 72px; }
th,
td {
  height: 25px;
  padding: 0;
}
th {
  background: #e6e6e6;
  font-weight: 300;
  text-align: center;
}
thead th {
  border-bottom: 1px solid #999;
  background: linear-gradient(#d0d0d0, #999) right / 1px 100% no-repeat #e6e6e6;
}
thead th:last-child {
  background: #e6e6e6;
}
tbody th {
  border-right: 1px solid #999;
  border-bottom: 1px solid #c0c0c0;
}
th.sel {
  background-color: #d2d2d2;
  color: #217346;
}
.all svg {
  margin-left: 8px;
}
td {
  overflow: hidden;
  padding-left: 2px;
  border-right: 1px solid #d4d4d4;
  border-bottom: 1px solid #d4d4d4;
  background: #fff;
}
td:last-child {
  border-right-color: #999;
}
.title td {
  font-weight: 700;
}
.title td:nth-child(-n + 8) {
  border-bottom-color: #d9e1f2;
}
.title .cur {
  position: relative;
  overflow: visible;
  padding-left: 3px;
  border-right-color: transparent;
}
.cur::before {
  content: "";
  position: absolute;
  inset: -2px -2px -2px -2px;
  border: 2px solid #217346;
}
.cur::after {
  content: "";
  position: absolute;
  right: -4px;
  bottom: -4px;
  width: 5px;
  height: 5px;
  border: 1px solid #fff;
  background: #217346;
  box-sizing: content-box;
}
.heads td {
  padding: 0;
  text-align: center;
}
.heads td:nth-child(-n + 8) {
  border-color: #d9e1f2;
  background: #d9e1f2;
}
.lat {
  font-size: 14px;
}
.lat a {
  color: #0563c1;
  text-underline-offset: 2px;
}
.mark {
  position: relative;
  overflow: visible;
}
.frame {
  position: absolute;
  inset: -6px -5px -4px -5px;
  border: 7px solid #f00;
  border-radius: 4px;
}
.badge {
  position: absolute;
  left: -48px;
  top: -11px;
  width: 42px;
  height: 42px;
  padding: 3px;
  border-radius: 50%;
  background: #fff;
  box-shadow: 1px 3px 5px #0004;
}
.badge b {
  display: block;
  height: 36px;
  border: 1px solid #f00;
  border-radius: 50%;
  color: #f00;
  font: 700 28px/34px "Noto Sans", sans-serif;
  text-align: center;
}

.vscroll {
  display: flex;
  flex-direction: column;
  width: 15px;
  padding-top: 2px;
}
.vscroll button,
.hscroll button {
  flex: none;
  width: 15px;
  height: 15px;
  border: 1px solid #ababab;
  background: #fff;
}
.track {
  flex: 1;
  background: #dadada;
}
.thumb {
  border: 1px solid #ababab;
  background: #fff;
}
.vscroll .thumb {
  height: 85%;
}

.sheetbar {
  display: flex;
  align-items: center;
  flex: none;
  height: 27px;
  padding-right: 21px;
}
.nav {
  width: 28px;
}
.nav:first-child {
  margin-left: 15px;
}
.stab {
  align-self: flex-start;
  width: 73px;
  height: 25px;
  margin: -1px 32px 0 29px;
  border: solid #999;
  border-width: 0 1px;
  background: linear-gradient(#217346, #217346) bottom / 100% 2px no-repeat #fff;
  color: #217346;
  font-size: 13px;
}
.hgrip {
  margin-left: auto;
  margin-right: 15px;
}
.hscroll {
  display: flex;
  width: 509px;
}
.hscroll .thumb {
  width: 89%;
  height: 15px;
}

.status {
  display: flex;
  align-items: center;
  flex: none;
  height: 22px;
  padding: 0 8px 0 7px;
  border-top: 1px solid #c6c6c6;
  background: #f3f2f1;
}
.macro {
  margin-left: 20px;
}
.views {
  display: flex;
  align-self: stretch;
  margin-left: auto;
}
.views button {
  width: 40px;
}
.z {
  width: 18px;
}
.status input {
  width: 100px;
  height: 12px;
  margin: 0;
  appearance: none;
  background: linear-gradient(#aaa, #aaa) center / 100% 1px no-repeat;
}
.status input::-webkit-slider-thumb {
  width: 5px;
  height: 12px;
  appearance: none;
  background: #777;
}
.pct {
  justify-content: flex-end;
  width: 42px;
}
</style>
